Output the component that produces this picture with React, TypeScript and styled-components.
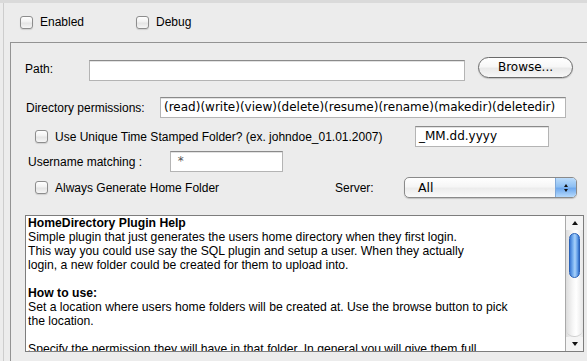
import React from "react";
import styled, { createGlobalStyle } from "styled-components";

const Global = createGlobalStyle`
  html, body { margin: 0; padding: 0; background: #ececec; }
  body { font-family: "Liberation Sans", Arial, sans-serif; font-size: 12px; color: #000; }
`;

const Window = styled.div`
  width: 587px;
  height: 361px;
  overflow: hidden;
  display: flex;
  flex-direction: column;
  background: #ececec;
`;

const TopStrip = styled.div`
  height: 3px;
  background: #dadada;
  flex: none;
`;

const Body = styled.div`
  flex: 1;
  display: flex;
  flex-direction: column;
  margin-left: 3px;
  border-left: 1px solid #cdcdcd;
  min-height: 0;
`;

const CheckRow = styled.div`
  height: 39px;
  display: flex;
  align-items: center;
  padding-left: 16px;
  padding-bottom: 1px;
  box-sizing: border-box;
  flex: none;
`;

const CheckItem = styled.label<{ $w?: number }>`
  display: flex;
  align-items: center;
  gap: 7px;
  width: ${(p) => (p.$w ? `${p.$w}px` : "auto")};
  flex: none;
  white-space: nowrap;
`;

const Box = styled.span`
  width: 11px;
  height: 11px;
  border: 1px solid #8d8d8d;
  border-radius: 3px;
  background: linear-gradient(#ffffff, #f1f1f1 45%, #e4e4e4 55%, #f6f6f6);
  box-shadow: 0 1px 1px rgba(0, 0, 0, 0.12);
  flex: none;
`;

const Panel = styled.div`
  flex: 1;
  margin-left: 6px;
  border-top: 1px solid #939393;
  border-left: 1px solid #939393;
  display: flex;
  flex-direction: column;
  min-height: 0;
`;

const Row = styled.div<{ $pl: number; $mt: number; $h?: number }>`
  display: flex;
  align-items: center;
  padding-left: ${(p) => p.$pl}px;
  margin-top: ${(p) => p.$mt}px;
  height: ${(p) => (p.$h ? `${p.$h}px` : "21px")};
  flex: none;
`;

const Label = styled.span<{ $w: number }>`
  width: ${(p) => p.$w}px;
  flex: none;
  white-space: nowrap;
`;

const Field = styled.div<{ $w: number; $self?: string }>`
  width: ${(p) => p.$w}px;
  height: 21px;
  box-sizing: border-box;
  background: #fff;
  border: 1px solid #b4b4b4;
  border-top-color: #8a8a8a;
  box-shadow: inset 0 1px 0 #e2e2e2;
  font-family: "DejaVu Sans", Verdana, sans-serif;
  font-size: 12px;
  line-height: 19px;
  padding-left: 3px;
  white-space: nowrap;
  overflow: hidden;
  flex: none;
  align-self: ${(p) => p.$self || "center"};
`;

const FieldText = styled.span<{ $muted?: boolean }>`
  color: ${(p) => (p.$muted ? "#555" : "#000")};
`;

const PillButton = styled.button`
  margin-left: 13px;
  width: 95px;
  height: 21px;
  align-self: flex-start;
  border: 1px solid #6a6a6a;
  border-radius: 11px;
  background: linear-gradient(#ffffff, #f7f7f7 45%, #e9e9e9 55%, #f7f7f7);
  box-shadow: 0 1px 1px rgba(0, 0, 0, 0.18);
  font-family: "DejaVu Sans", Verdana, sans-serif;
  font-size: 12px;
  color: #000;
  padding: 0;
  line-height: 19px;
  flex: none;
`;

const Select = styled.div`
  width: 173px;
  height: 21px;
  box-sizing: border-box;
  border: 1px solid #8a8a8a;
  border-radius: 5px;
  display: flex;
  overflow: hidden;
  background: linear-gradient(#ffffff, #f6f6f6 45%, #ececec 55%, #fafafa);
  box-shadow: 0 1px 1px rgba(0, 0, 0, 0.18);
  flex: none;
`;

const SelectValue = styled.span`
  flex: 1;
  padding-left: 13px;
  font-family: "DejaVu Sans", Verdana, sans-serif;
  font-size: 12.5px;
  line-height: 19px;
`;

const SelectArrows = styled.span`
  width: 20px;
  border-left: 1px solid #7fa8d8;
  background: linear-gradient(#bcdcfb, #8ec0f3 45%, #6fa9ee 55%, #b6dafc);
  display: flex;
  flex-direction: column;
  align-items: center;
  justify-content: center;
  gap: 2px;
`;

const Tri = styled.span<{ $down?: boolean; $size?: number }>`
  width: 0;
  height: 0;
  border-left: ${(p) => p.$size ?? 3}px solid transparent;
  border-right: ${(p) => p.$size ?? 3}px solid transparent;
  ${(p) =>
    p.$down
      ? `border-top: ${(p.$size ?? 3) + 1}px solid #111;`
      : `border-bottom: ${(p.$size ?? 3) + 1}px solid #111;`}
`;

const Help = styled.div`
  margin-top: 17px;
  margin-left: 14px;
  width: 559px;
  height: 137px;
  box-sizing: border-box;
  border: 1px solid #7d7d7d;
  background: #fff;
  display: flex;
  flex: none;
  overflow: hidden;
`;

const HelpText = styled.div`
  flex: 1;
  padding: 0 0 0 2px;
  font-family: "Liberation Sans", Arial, sans-serif;
  font-size: 12.2px;
  line-height: 14px;
  white-space: nowrap;
  overflow: hidden;
`;

const HelpHead = styled.div`
  font-weight: bold;
`;

const Blank = styled.div`
  height: 14px;
`;

const ScrollBar = styled.div`
  width: 17px;
  border-left: 1px solid #a9a9a9;
  display: flex;
  flex-direction: column;
  background: linear-gradient(90deg, #dcdcdc, #f6f6f6 40%, #ffffff 60%, #e6e6e6);
`;

const ArrowBtn = styled.div`
  height: 14px;
  display: flex;
  align-items: center;
  justify-content: center;
  background: #f4f4f4;
  flex: none;
`;

const Track = styled.div`
  flex: 1;
  display: flex;
  flex-direction: column;
  align-items: center;
  padding-top: 3px;
  border-bottom-left-radius: 8px;
  border-bottom-right-radius: 8px;
  border-bottom: 1px solid #cfcfcf;
`;

const Thumb = styled.div`
  width: 11px;
  height: 45px;
  border-radius: 6px;
  border: 1px solid #2a62b8;
  box-sizing: border-box;
  background: linear-gradient(90deg, #3b78d3, #7db5f2 35%, #a9d2fb 55%, #5a97e4 85%, #2f6ac4);
`;

export default function App() {
  return (
    <>
      <Global />
      <Window>
        <TopStrip />
        <Body>
          <CheckRow>
            <CheckItem $w={116}>
              <Box />
              Enabled
            </CheckItem>
            <CheckItem>
              <Box />
              Debug
            </CheckItem>
          </CheckRow>
          <Panel>
            <Row $pl={14} $mt={14} $h={24}>
              <Label $w={64}>Path:</Label>
              <Field $w={376} $self="flex-end" />
              <PillButton>Browse...</PillButton>
            </Row>
            <Row $pl={15} $mt={16}>
              <Label $w={134}>Directory permissions:</Label>
              <Field $w={406}>
                <FieldText>(read)(write)(view)(delete)(resume)(rename)(makedir)(deletedir)</FieldText>
              </Field>
            </Row>
            <Row $pl={24} $mt={8}>
              <CheckItem $w={380}>
                <Box />
                Use Unique Time Stamped Folder? (ex. johndoe_01.01.2007)
              </CheckItem>
              <Field $w={134}>
                <FieldText>_MM.dd.yyyy</FieldText>
              </Field>
            </Row>
            <Row $pl={17} $mt={4}>
              <Label $w={142}>Username matching :</Label>
              <Field $w={113}>
                <FieldText $muted>&nbsp;*</FieldText>
              </Field>
            </Row>
            <Row $pl={24} $mt={5}>
              <CheckItem $w={300}>
                <Box />
                Always Generate Home Folder
              </CheckItem>
              <Label $w={69}>Server:</Label>
              <Select>
                <SelectValue>All</SelectValue>
                <SelectArrows>
                  <Tri $size={2.5} />
                  <Tri $size={2.5} $down />
                </SelectArrows>
              </Select>
            </Row>
            <Help>
              <HelpText>
                <HelpHead>HomeDirectory Plugin Help</HelpHead>
                <div>Simple plugin that just generates the users home directory when they first login.</div>
                <div>This way you could use say the SQL plugin and setup a user. When they actually</div>
                <div>login, a new folder could be created for them to upload into.</div>
                <Blank />
                <HelpHead>How to use:</HelpHead>
                <div>Set a location where users home folders will be created at. Use the browse button to pick</div>
                <div>the location.</div>
                <Blank />
                <div>Specify the permission they will have in that folder. In general you will give them full</div>
              </HelpText>
              <ScrollBar>
                <ArrowBtn>
                  <Tri $size={3} />
                </ArrowBtn>
                <Track>
                  <Thumb />
                </Track>
                <ArrowBtn>
                  <Tri $size={3} $down />
                </ArrowBtn>
              </ScrollBar>
            </Help>
          </Panel>
        </Body>
      </Window>
    </>
  );
}
